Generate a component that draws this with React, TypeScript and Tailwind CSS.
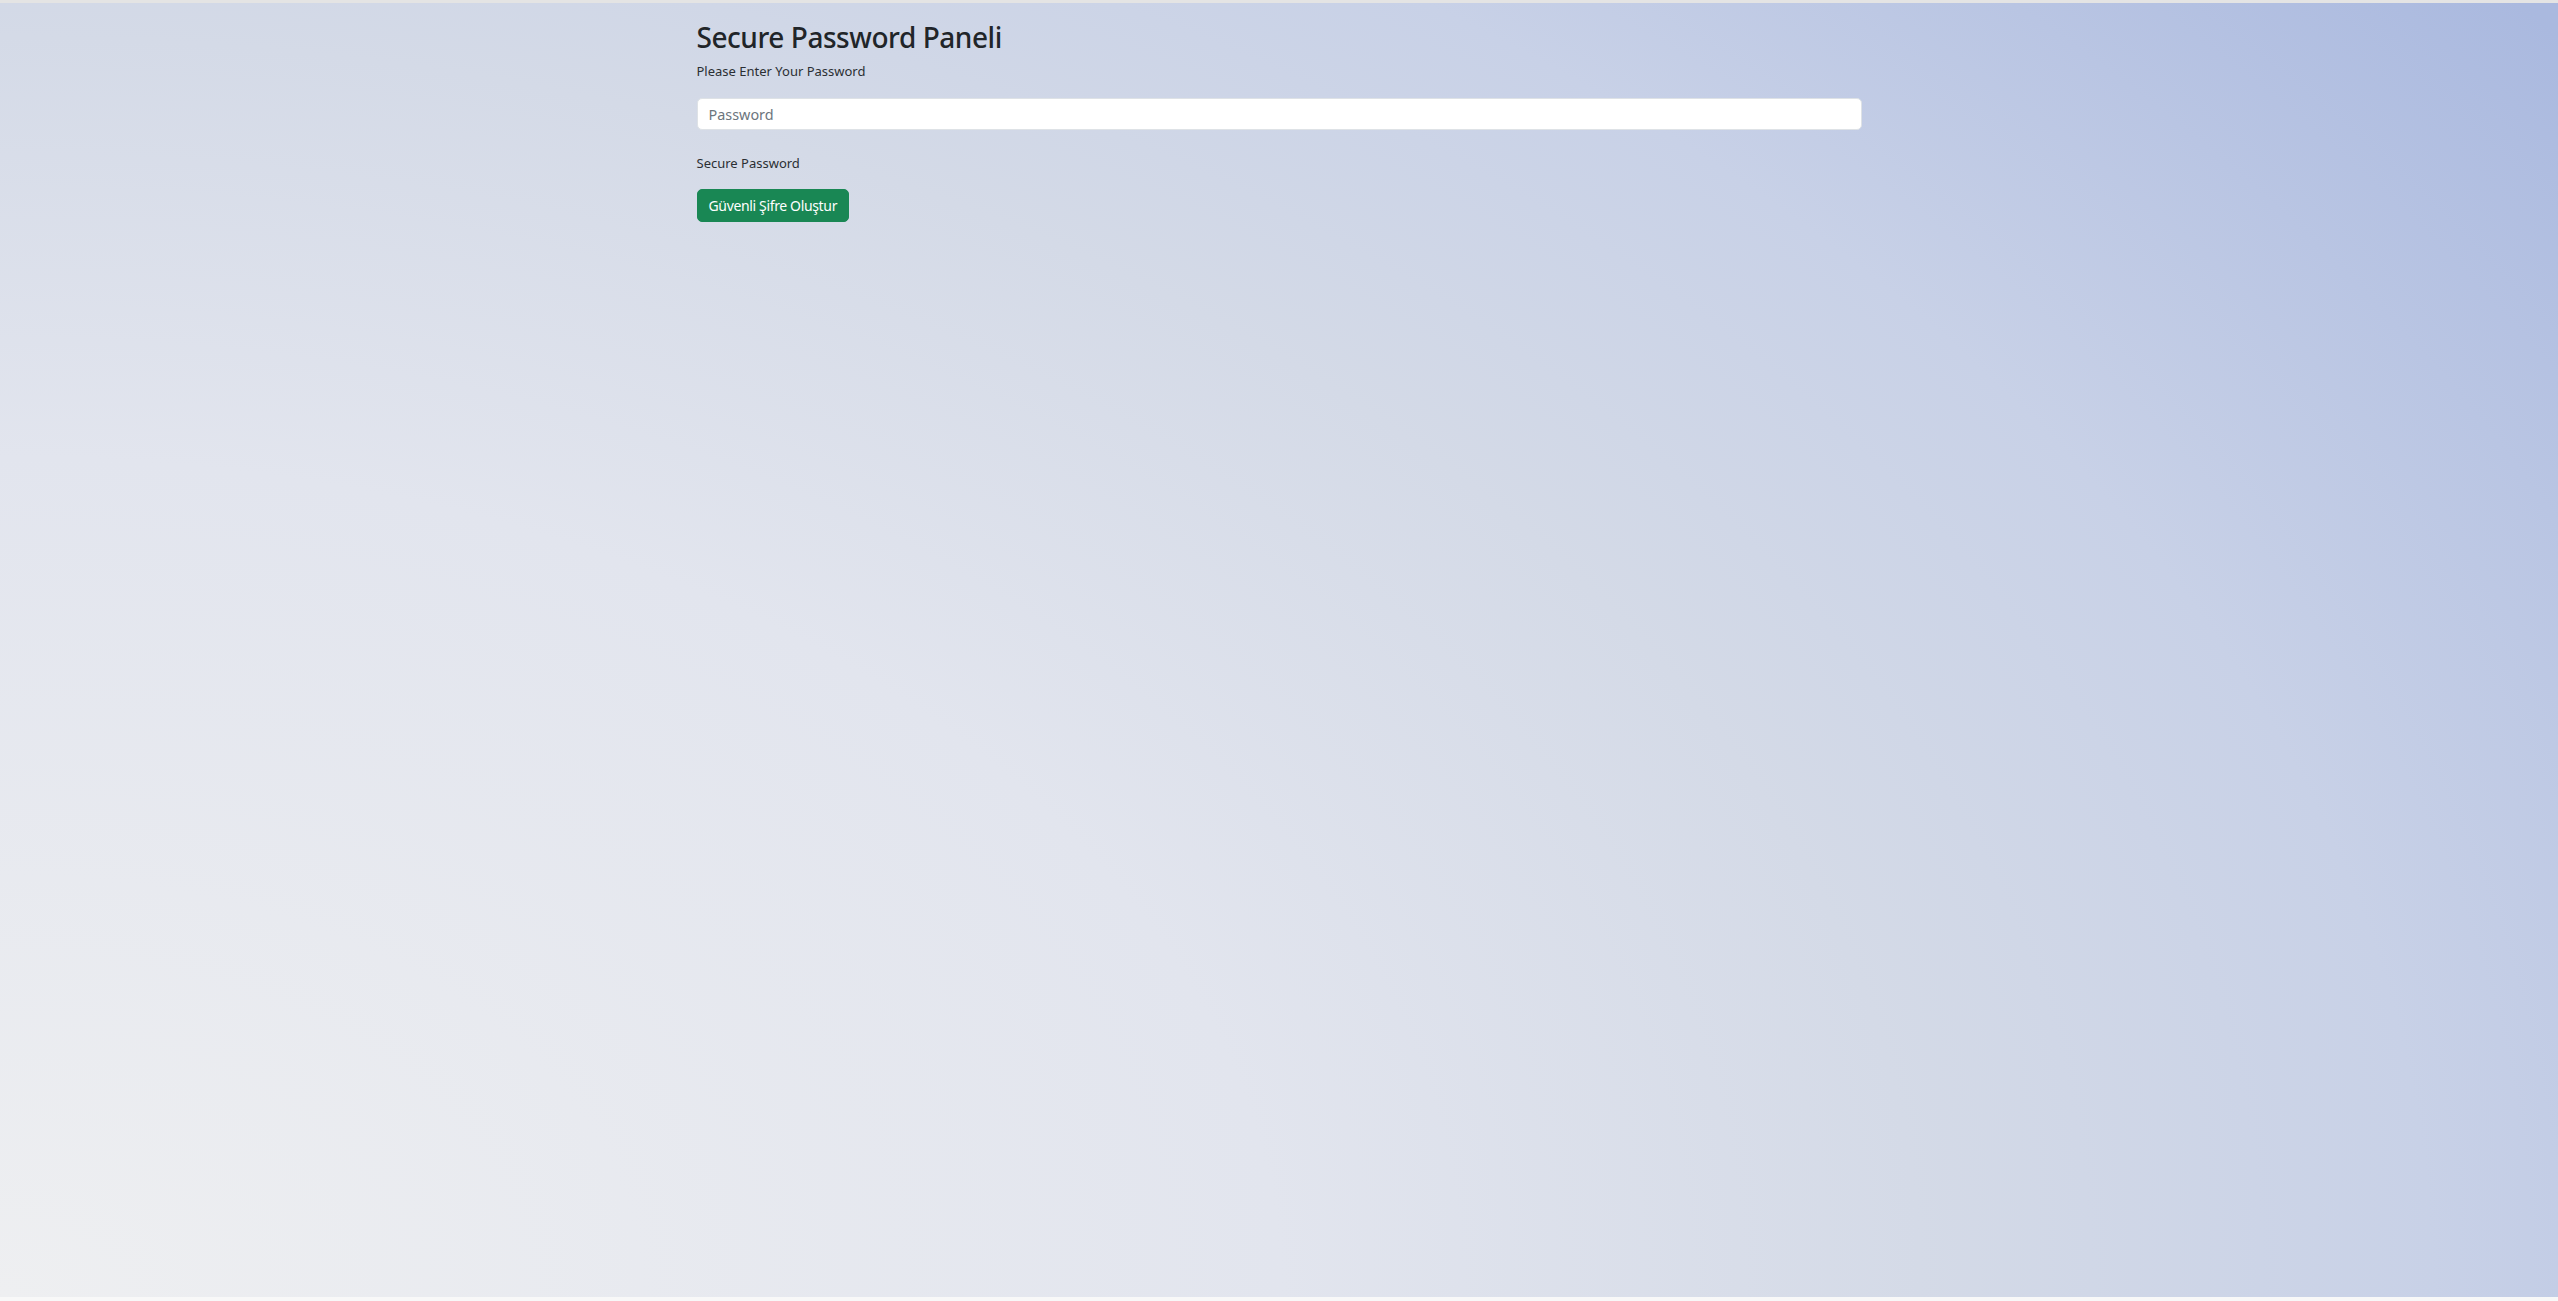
import { useState } from "react";

export default function App() {
  const [password, setPassword] = useState("");

  return (
    <div className="h-screen flex flex-col font-['Noto_Sans',sans-serif] text-[#212529]">
      <div className="h-[3px] bg-[#e4e4e4]" />
      <div className="flex-1 bg-[radial-gradient(ellipse_3200px_2100px_at_0%_100%,#eeeff1_0%,#e2e5ee_40%,#d4dae7_60%,#c8d1e7_76%,#aab9df_100%)]">
        <div className="mx-auto w-[1165px] pt-[17px]">
          <h2 className="text-[28px] leading-[34px] font-medium tracking-[-0.45px] mb-[8px]">Secure Password Paneli</h2>
          <p className="text-[13px] leading-[19px] text-[#2b2f33] mb-[17px]">Please Enter Your Password</p>
          <input
            type="password"
            value={password}
            onChange={(e) => setPassword(e.target.value)}
            placeholder="Password"
            className="block w-full h-[32px] px-[11px] text-[14.4px] bg-white border border-[#dee2e6] rounded-[5px] outline-none placeholder:text-[#6c757d]"
          />
          <p className="text-[13px] leading-[19px] text-[#2b2f33] mt-[24px] mb-[16px]">Secure Password</p>
          <button className="h-[33px] px-[11px] text-[14px] tracking-[-0.35px] text-white bg-[#198754] border border-[#198754] rounded-[5px]">
            Güvenli Şifre Oluştur
          </button>
        </div>
      </div>
      <div className="h-[4px] bg-[#f8f8f8]" />
    </div>
  );
}
